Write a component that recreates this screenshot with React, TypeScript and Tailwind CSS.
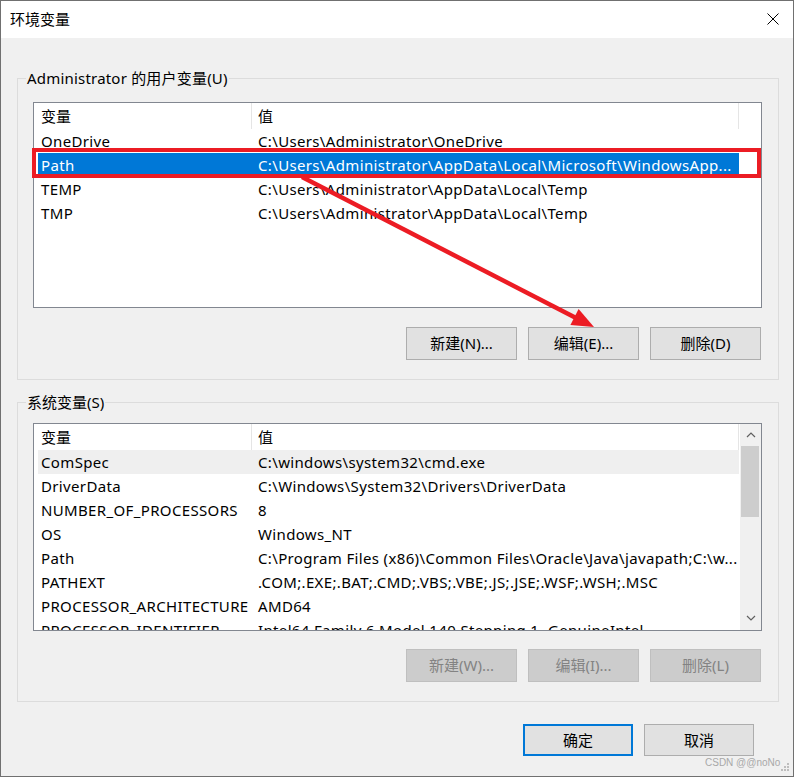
import React from "react";

type Row = [string, string];

const userRows: Row[] = [
  ["OneDrive", "C:\\Users\\Administrator\\OneDrive"],
  ["Path", "C:\\Users\\Administrator\\AppData\\Local\\Microsoft\\WindowsApp..."],
  ["TEMP", "C:\\Users\\Administrator\\AppData\\Local\\Temp"],
  ["TMP", "C:\\Users\\Administrator\\AppData\\Local\\Temp"],
];

const sysRows: Row[] = [
  ["ComSpec", "C:\\windows\\system32\\cmd.exe"],
  ["DriverData", "C:\\Windows\\System32\\Drivers\\DriverData"],
  ["NUMBER_OF_PROCESSORS", "8"],
  ["OS", "Windows_NT"],
  ["Path", "C:\\Program Files (x86)\\Common Files\\Oracle\\Java\\javapath;C:\\w..."],
  ["PATHEXT", ".COM;.EXE;.BAT;.CMD;.VBS;.VBE;.JS;.JSE;.WSF;.WSH;.MSC"],
  ["PROCESSOR_ARCHITECTURE", "AMD64"],
  ["PROCESSOR_IDENTIFIER", "Intel64 Family 6 Model 140 Stepping 1, GenuineIntel"],
];

function Header() {
  return (
    <div className="flex h-[26px] shrink-0 leading-[26px]">
      <div className="w-[218px] pl-[7px] border-r border-[#e5e5e5]">变量</div>
      <div className="w-[487px] pl-[6px] border-r border-[#e5e5e5]">值</div>
    </div>
  );
}

function ListRows({ rows, selected, hover }: { rows: Row[]; selected?: number; hover?: number }) {
  return (
    <div className="flex flex-col">
      {rows.map((r, i) => {
        const sel = i === selected;
        const hov = i === hover;
        return (
          <div
            key={i}
            className={
              "ml-[4px] w-[701px] h-[24px] shrink-0 flex leading-[24px] whitespace-nowrap tracking-[0.35px] " +
              (sel ? "bg-[#0078d7] text-white" : hov ? "bg-[#efefef]" : "")
            }
          >
            <div className="w-[214px] pl-[3px] overflow-hidden">{r[0]}</div>
            <div className="flex-1 pl-[6px] overflow-hidden">{r[1]}</div>
          </div>
        );
      })}
    </div>
  );
}

function Chevron({ up }: { up?: boolean }) {
  return (
    <svg width="10" height="6" viewBox="0 0 10 6">
      <path
        d={up ? "M1 5 L5 1 L9 5" : "M1 1 L5 5 L9 1"}
        fill="none"
        stroke="#606060"
        strokeWidth="1.2"
      />
    </svg>
  );
}

function Btn({ children, disabled }: { children: React.ReactNode; disabled?: boolean }) {
  return (
    <div
      className={
        "w-[111px] h-[33px] flex items-center justify-center border " +
        (disabled
          ? "bg-[#cccccc] border-[#bfbfbf] text-[#838383]"
          : "bg-[#e1e1e1] border-[#adadad] text-black")
      }
    >
      {children}
    </div>
  );
}

export default function App() {
  return (
    <div className="relative w-[794px] h-[777px] font-['Noto_Sans','Noto_Sans_CJK_SC',sans-serif] text-[15px] text-black">
      <div className="w-[794px] h-[777px] border border-[#707070] bg-[#f0f0f0] flex flex-col">
        {/* Title bar */}
        <div className="h-[37px] shrink-0 bg-white flex items-center justify-between pl-[9px] pr-[14px]">
          <span className="leading-[20px] mt-[-2px]">环境变量</span>
          <svg width="12" height="12" viewBox="0 0 12 12" className="mt-[-1px]">
            <path d="M0.5 0.5 L11.5 11.5 M11.5 0.5 L0.5 11.5" stroke="#000" strokeWidth="1" />
          </svg>
        </div>

        <div className="flex flex-col pl-[16px] pr-[14px]">
          {/* User variables */}
          <fieldset className="mt-[30px] border border-[#dcdcdc] pl-[8px] pr-[8px] pt-[14px] pb-[19px]">
            <legend className="px-[1px] leading-[20px] tracking-[0.2px]">Administrator 的用户变量(U)</legend>
            <div className="ml-[7px] mr-[8px] h-[206px] border border-[#828790] bg-white overflow-hidden flex flex-col">
              <Header />
              <ListRows rows={userRows} selected={1} />
            </div>
            <div className="ml-[7px] mr-[9px] mt-[19px] flex justify-end gap-[11px]">
              <Btn>新建(N)...</Btn>
              <Btn>编辑(E)...</Btn>
              <Btn>删除(D)</Btn>
            </div>
          </fieldset>

          {/* System variables */}
          <fieldset className="mt-[12px] border border-[#dcdcdc] pl-[8px] pr-[8px] pt-[11px] pb-[19px]">
            <legend className="px-[1px] leading-[20px]">系统变量(S)</legend>
            <div className="ml-[7px] mr-[8px] h-[208px] border border-[#828790] bg-white overflow-hidden flex">
              <div className="w-[706px] flex flex-col overflow-hidden">
                <Header />
                <ListRows rows={sysRows} hover={0} />
              </div>
              <div className="w-[21px] bg-[#f0f0f0] flex flex-col">
                <div className="h-[22px] flex items-center justify-center">
                  <Chevron up />
                </div>
                <div className="ml-[1px] w-[18px] h-[71px] bg-[#cdcdcd]" />
                <div className="flex-1" />
                <div className="h-[24px] flex items-center justify-center">
                  <Chevron />
                </div>
              </div>
            </div>
            <div className="ml-[7px] mr-[9px] mt-[18px] flex justify-end gap-[11px]">
              <Btn disabled>新建(W)...</Btn>
              <Btn disabled>编辑(I)...</Btn>
              <Btn disabled>删除(L)</Btn>
            </div>
          </fieldset>

          {/* OK / Cancel */}
          <div className="mt-[22px] mr-[25px] flex justify-end gap-[11px]">
            <div className="w-[110px] h-[32px] flex items-center justify-center border-2 border-[#0078d7] bg-[#e1e1e1]">
              确定
            </div>
            <div className="w-[110px] h-[32px] flex items-center justify-center border border-[#adadad] bg-[#e1e1e1]">
              取消
            </div>
          </div>
        </div>
      </div>

      {/* Annotation overlay: red box + arrow */}
      <svg className="absolute left-0 top-0 pointer-events-none" width="794" height="777" viewBox="0 0 794 777">
        <rect x="34" y="150" width="725" height="26" fill="none" stroke="#ec1c24" strokeWidth="4" />
        <line x1="302" y1="177" x2="578" y2="319" stroke="#ec1c24" strokeWidth="4.5" />
        <polygon points="594,327 578.6,309 570.4,325" fill="#ec1c24" />
        {/* resize grip */}
        <g fill="#bdbdbd">
          <rect x="787" y="763" width="2" height="2" />
          <rect x="784" y="766" width="2" height="2" />
          <rect x="787" y="766" width="2" height="2" />
          <rect x="781" y="769" width="2" height="2" />
          <rect x="784" y="769" width="2" height="2" />
          <rect x="787" y="769" width="2" height="2" />
        </g>
      </svg>

      {/* Watermark */}
      <div className="absolute left-[705px] top-[756px] text-[10px] leading-[14px] text-[#a8a8a8] font-['Liberation_Sans',sans-serif] pointer-events-none">
        CSDN @@noNo
      </div>
    </div>
  );
}
